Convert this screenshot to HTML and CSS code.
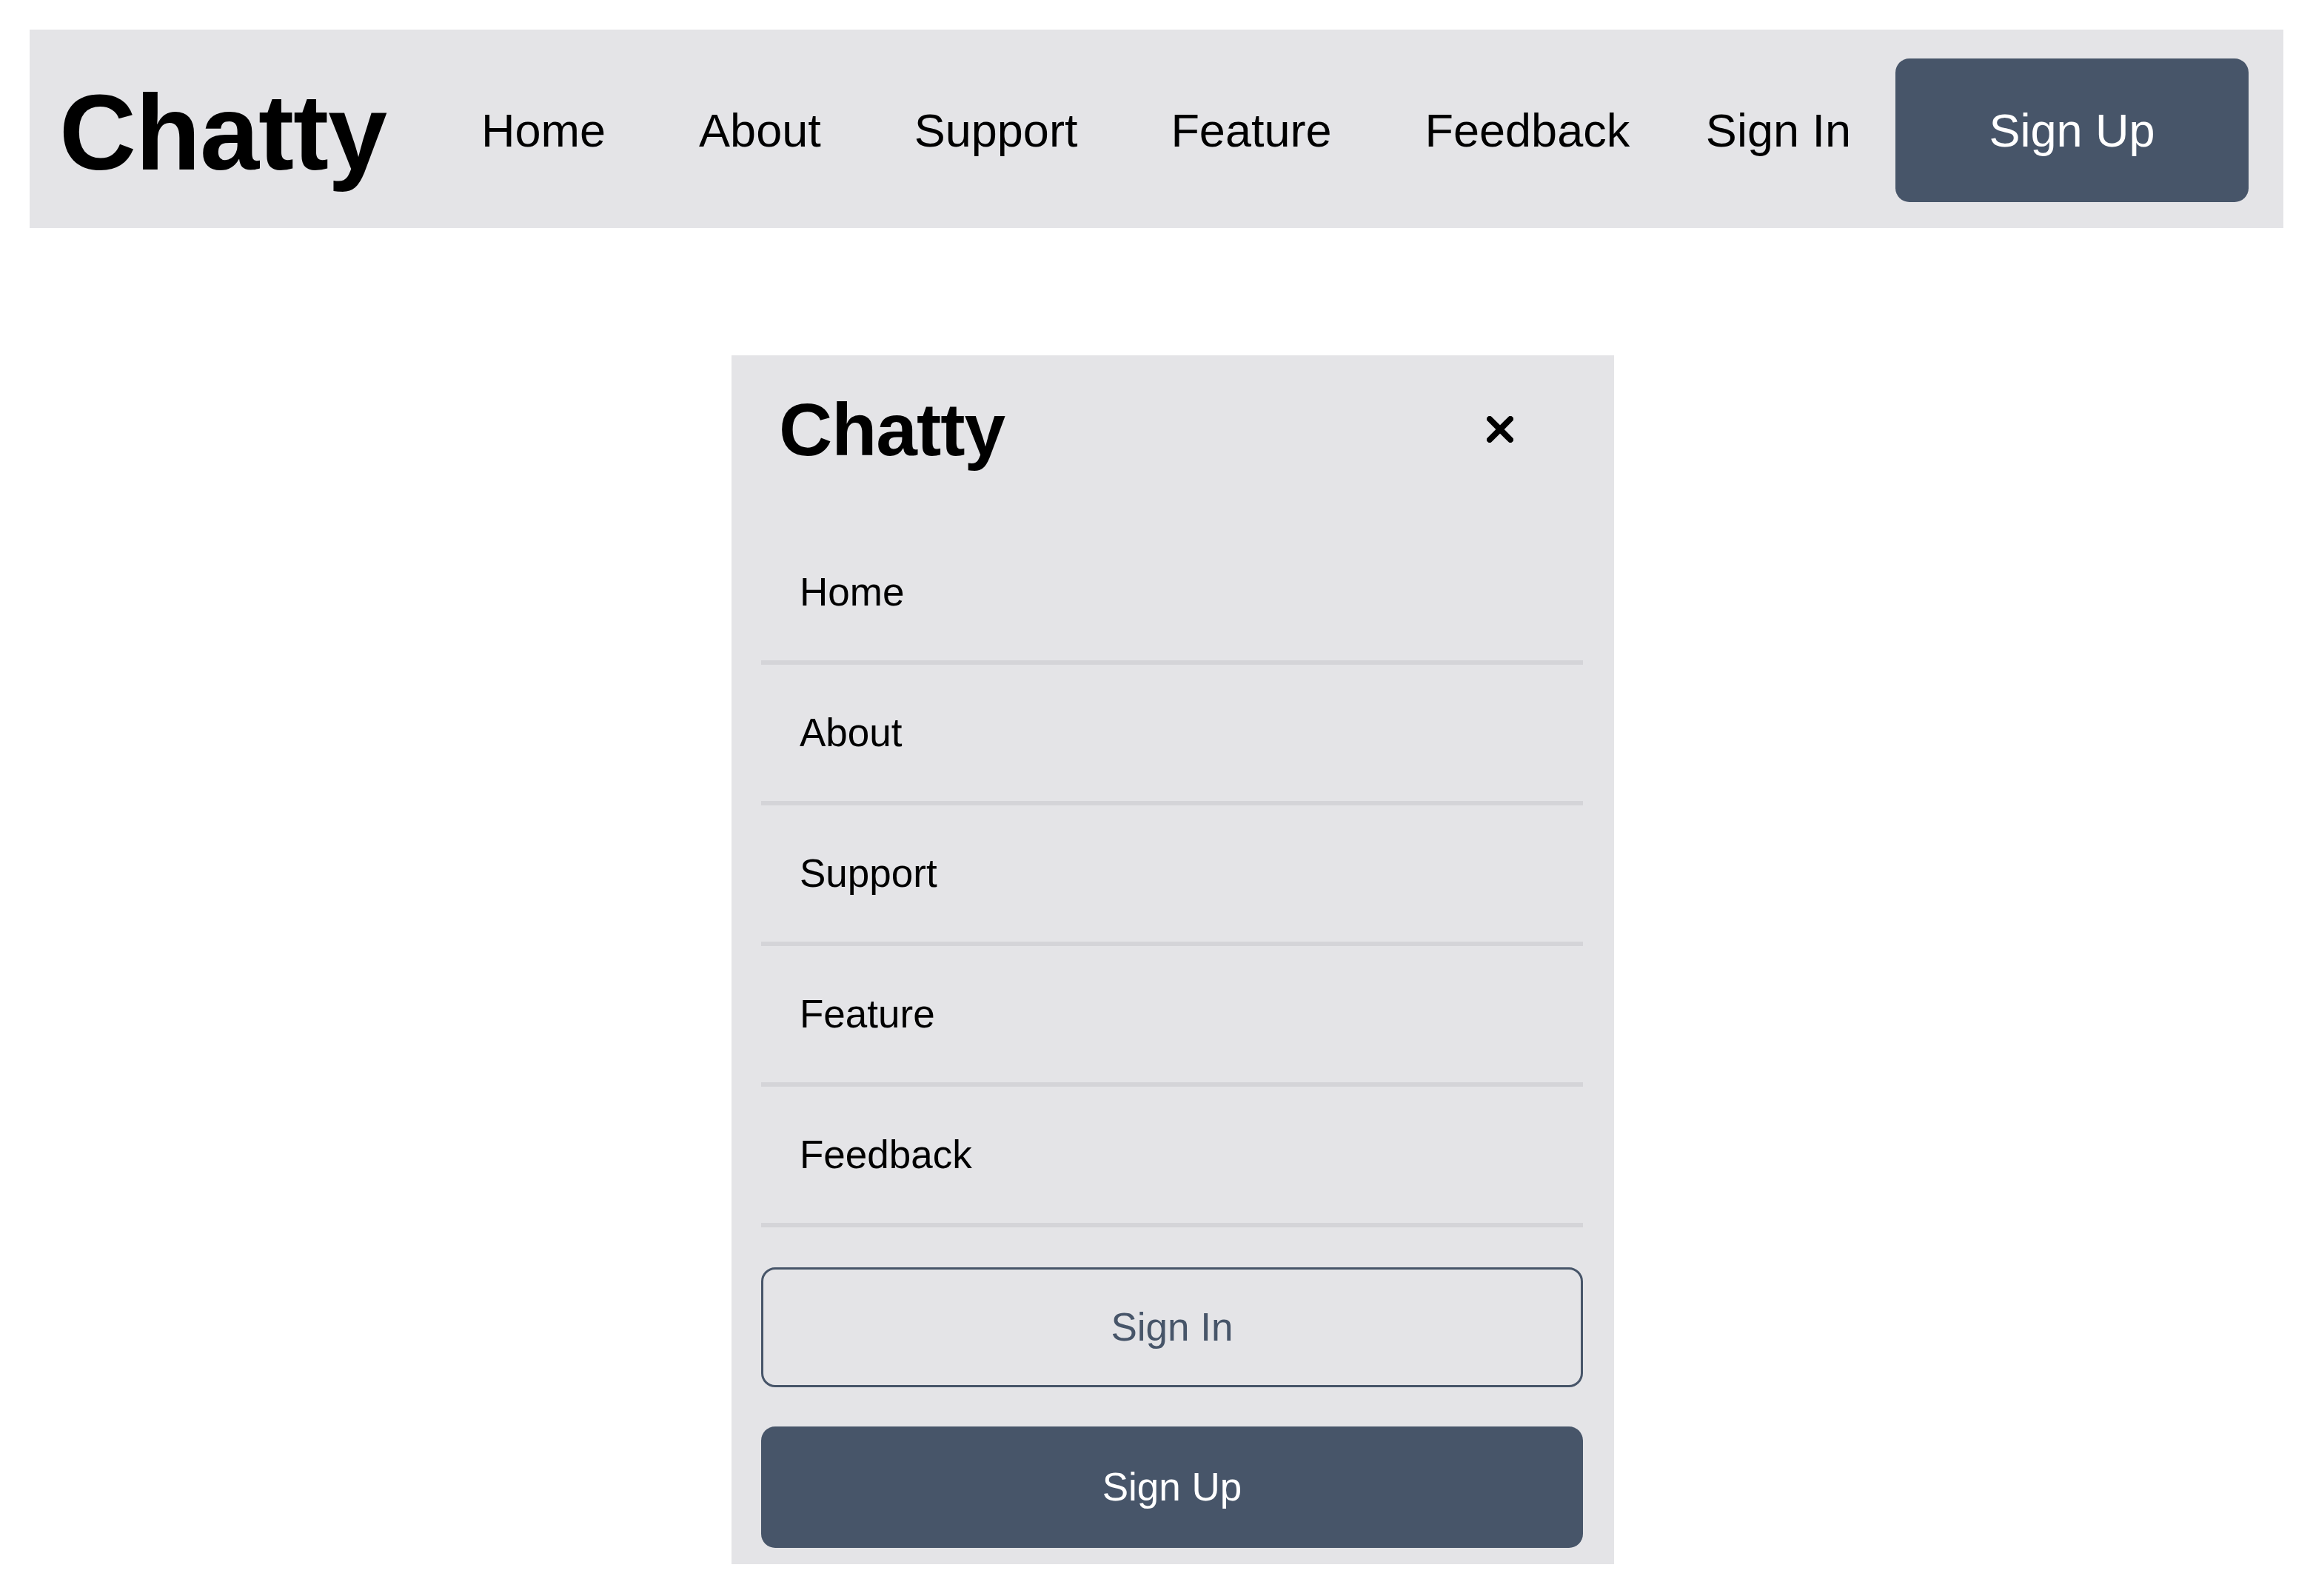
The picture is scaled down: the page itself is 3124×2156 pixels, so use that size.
FILE: index.html
```html
<!DOCTYPE html>
<html lang="en">
<head>
<meta charset="utf-8">
<title>Chatty</title>
<link rel="stylesheet" href="styles.css">
</head>
<body>
  <header class="topbar">
    <a class="logo" href="#">Chatty</a>
    <nav class="nav">
      <a class="nav-link" href="#">Home</a>
      <a class="nav-link" href="#">About</a>
      <a class="nav-link" href="#">Support</a>
      <a class="nav-link" href="#">Feature</a>
      <a class="nav-link" href="#">Feedback</a>
    </nav>
    <div class="auth">
      <a class="nav-link" href="#">Sign In</a>
      <a class="btn-primary" href="#">Sign Up</a>
    </div>
  </header>

  <aside class="panel">
    <div class="panel-head">
      <a class="panel-logo" href="#">Chatty</a>
      <button class="close" type="button" aria-label="Close">
        <svg viewBox="0 0 36 36" width="36" height="36"><path d="M4 4 L32 32 M32 4 L4 32" stroke="#000" stroke-width="8" stroke-linecap="round" fill="none"/></svg>
      </button>
    </div>
    <ul class="menu">
      <li class="menu-item"><a href="#">Home</a></li>
      <li class="menu-item"><a href="#">About</a></li>
      <li class="menu-item"><a href="#">Support</a></li>
      <li class="menu-item"><a href="#">Feature</a></li>
      <li class="menu-item"><a href="#">Feedback</a></li>
    </ul>
    <a class="btn-outline" href="#">Sign In</a>
    <a class="btn-solid" href="#">Sign Up</a>
  </aside>
</body>
</html>
```

FILE: styles.css
```css
* { box-sizing: border-box; }

html, body { background: #ffffff; }

body {
  margin: 0;
  padding: 40px;
  font-family: "Liberation Sans", Arial, Helvetica, sans-serif;
  color: #000;
}

a { color: inherit; text-decoration: none; }

.topbar {
  display: flex;
  align-items: center;
  height: 268px;
  padding: 38px 47px 34px 40px;
  background: #e4e4e7;
}

.logo {
  font-size: 144px;
  font-weight: 700;
  line-height: 144px;
  letter-spacing: -1px;
  padding-top: 8px;
}

.nav {
  display: flex;
  align-items: center;
  gap: 126px;
  margin-left: 128px;
}

.nav-link {
  font-size: 63px;
  line-height: 94px;
}

.auth {
  display: flex;
  align-items: center;
  gap: 60px;
  margin-left: auto;
}

.btn-primary {
  display: flex;
  align-items: center;
  justify-content: center;
  width: 477px;
  height: 194px;
  border-radius: 19px;
  background: #475569;
  color: #fff;
  font-size: 63px;
  line-height: 94px;
}

.panel {
  width: 1192px;
  margin: 172px 0 0 948px;
  padding: 50px 42px 22px 40px;
  background: #e4e4e7;
}

.panel-head {
  display: flex;
  align-items: center;
  justify-content: space-between;
  height: 100px;
  padding: 0 94px 0 24px;
  margin-bottom: 78px;
}

.panel-logo {
  font-size: 100px;
  font-weight: 700;
  line-height: 100px;
  letter-spacing: -1px;
}

.close {
  display: block;
  width: 36px;
  height: 36px;
  padding: 0;
  border: 0;
  background: transparent;
}

.close svg { display: block; }

.menu {
  list-style: none;
  margin: 0 0 54px;
  padding: 0;
}

.menu-item {
  display: flex;
  align-items: center;
  height: 190px;
  padding: 0 52px;
  border-bottom: 6px solid #d4d4d8;
  font-size: 53px;
  line-height: 80px;
}

.btn-outline,
.btn-solid {
  display: flex;
  align-items: center;
  justify-content: center;
  width: 100%;
  border-radius: 19px;
  font-size: 53px;
  line-height: 80px;
}

.btn-outline {
  height: 162px;
  border: 3px solid #475569;
  color: #475569;
  margin-bottom: 53px;
}

.btn-solid {
  height: 164px;
  background: #475569;
  color: #fff;
}
```
